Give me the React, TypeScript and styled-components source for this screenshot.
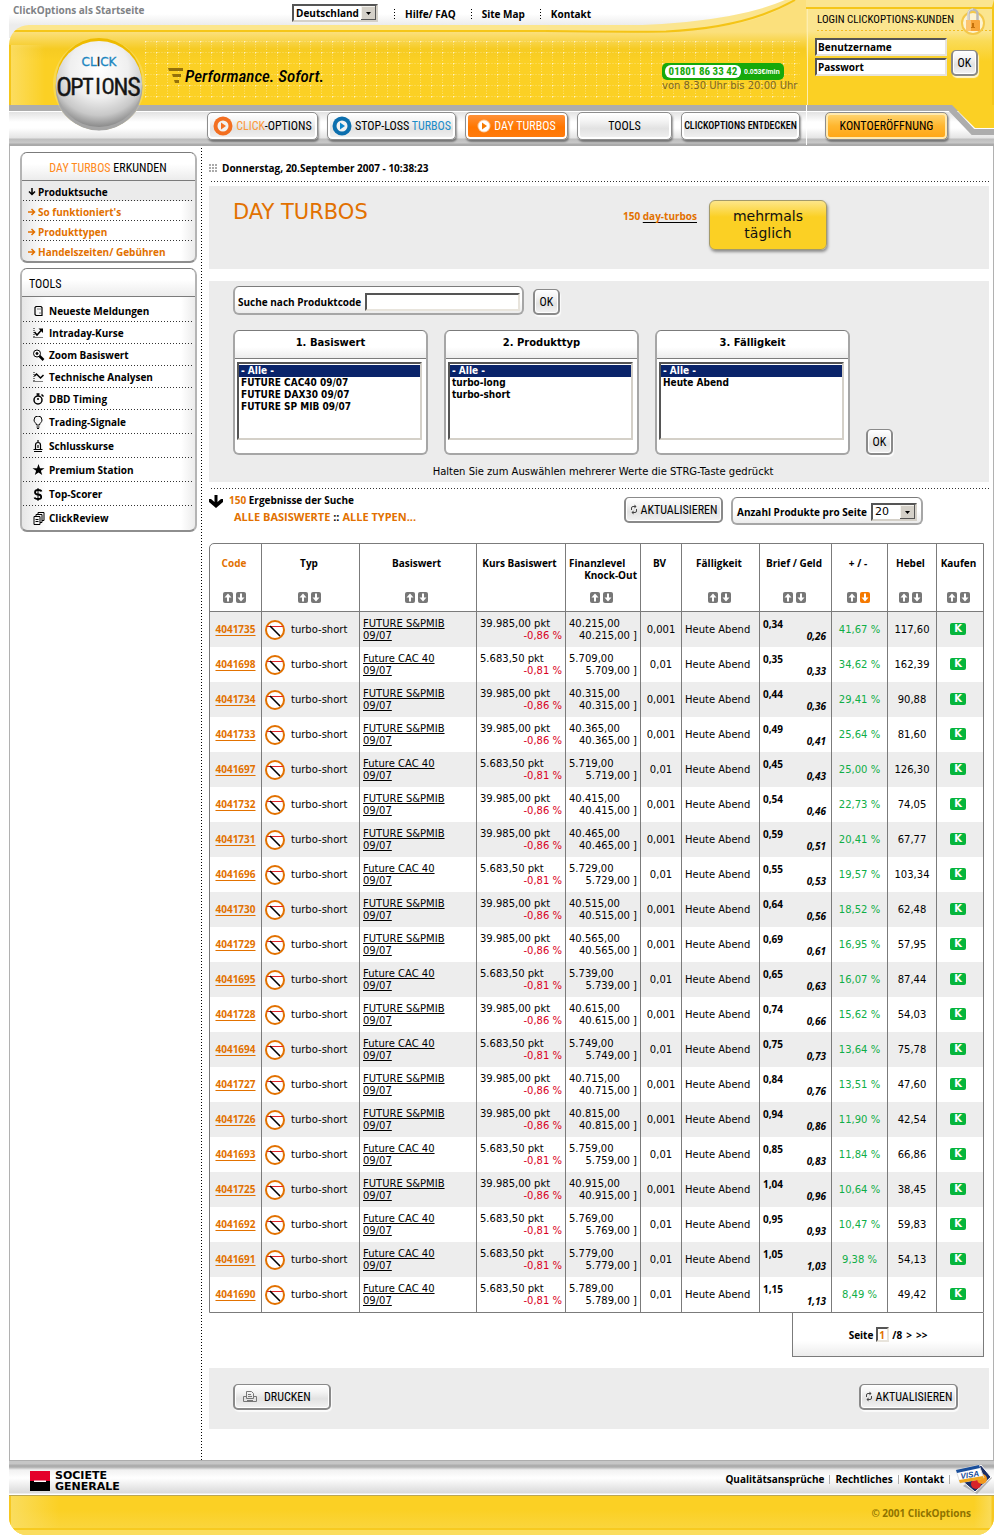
import React from 'react';
import styled, { createGlobalStyle, css } from 'styled-components';

const wide = `'DejaVu Sans', Verdana, sans-serif`;
const bold = `'Open Sans', 'Noto Sans', Tahoma, sans-serif`;
const narrow = `'Liberation Sans Narrow', 'Roboto Condensed', 'Arial Narrow', 'Liberation Sans', sans-serif`;

const orange = '#e27100';
const line = '#7b7b7b';
const dotsX = 'repeating-linear-gradient(90deg, #333 0 1px, transparent 1px 3px)';
const dotsY = 'repeating-linear-gradient(180deg, #000 0 1px, transparent 1px 3px)';

const GlobalStyle = createGlobalStyle`
  * { box-sizing: border-box; }
  body { margin: 0; background: #fff; color: #000; font: 10px/12px ${wide}; }
  a { color: inherit; text-decoration: none; }
  button { cursor: pointer; }
`;

const strong = css`
  font-family: ${bold};
  font-weight: 700;
  font-size: 10px;
`;

const Page = styled.div`
  margin: 0 8px 0 9px;
  min-width: 900px;
`;

/* ---------- header ---------- */

const Header = styled.header`
  position: relative;
`;

const Upper = styled.div`
  display: grid;
  grid-template-columns: 1fr 188px;
`;

const UpperLeft = styled.div`
  position: relative;
`;

const TopBar = styled.nav`
  position: relative;
  z-index: 2;
  display: flex;
  height: 25px;
  padding: 4px 0 0 4px;
  ${strong}
`;

const TopShade = styled.div`
  position: absolute;
  inset: 14px 0 auto 0;
  height: 24px;
  background: linear-gradient(#fff, #ececec 11px);
`;

const StartLink = styled.a`
  flex: 0 0 279px;
  color: #808285;
`;

const SelectBox = styled.span`
  position: relative;
  display: inline-block;
  select {
    appearance: none;
    display: block;
    width: 100%;
    height: 18px;
    padding: 0 14px 0 2px;
    border: 2px solid;
    border-color: #555 #d4d0c8 #d4d0c8 #555;
    border-radius: 0;
    background: #fff;
    color: #000;
    font: inherit;
  }
`;

const CountrySelect = styled(SelectBox)`
  width: 86px;
`;

const SizeSelect = styled(SelectBox)`
  width: 46px;
  font: 11px ${wide};
`;

const DropMark = styled.svg`
  position: absolute;
  top: 2px;
  right: 2px;
  pointer-events: none;
`;

const TopLinks = styled.div`
  display: flex;
  align-items: flex-start;
  margin: 4px 0 0 16px;
  a {
    padding: 0 15px 0 11px;
    background: ${dotsY} 0 1px / 1px 10px no-repeat;
  }
`;

const Banner = styled.div`
  position: relative;
  height: 80px;
  display: flex;
  justify-content: space-between;
  padding: 38px 3px 0 159px;
  border-radius: 20px 0 0 0;
  background:
    linear-gradient(90deg, #f5c619 0 2px, rgba(252, 226, 120, 0.7) 2px, transparent 36px) 0 20px / 100% 100% no-repeat,
    linear-gradient(#fce68c 0 5px, #f5c619 5px 7px, #fbe07c 7px, #f6cb22 24px, #fbd024 36px);
`;

const BackArt = styled.svg`
  position: absolute;
  pointer-events: none;
`;

const GridArt = styled(BackArt)`
  left: 136px;
  top: 16px;
  width: calc(100% - 142px);
  height: 58px;
`;

const CurveArt = styled(BackArt)`
  z-index: 1;
  top: 0;
  right: 0;
`;

const Slogan = styled.p`
  position: relative;
  display: flex;
  align-items: flex-start;
  margin: 0;
  font: italic 500 17px/26px ${narrow};
  svg { margin: 4px 1px 0 0; }
`;

const Hotline = styled.div`
  position: relative;
  width: 141px;
  color: #7a6528;
  white-space: nowrap;
`;

const Pill = styled.div`
  display: flex;
  align-items: center;
  width: 122px;
  height: 17px;
  padding: 2px 1px 2px 3px;
  border-radius: 5px;
  background: #16a90b;
  color: #fff;
  font: 700 7px/12px 'Liberation Sans', sans-serif;
  b {
    flex: 0 0 76px;
    margin-right: 3px;
    border-radius: 6px;
    background: #fff;
    color: #16a90b;
    font: 700 11px/13px ${narrow};
    text-align: center;
  }
`;

const Login = styled.form`
  position: relative;
  padding: 13px 0 0 9px;
  border-top: 7px solid #fbe58f;
  border-right: 2px solid #f5c619;
  background:
    linear-gradient(#f5c619, #f5c619) 0 0 / 100% 2px no-repeat,
    linear-gradient(90deg, transparent 1px, #fdeeb0 1px 2px, transparent 2px),
    linear-gradient(#fbe58f 24px, #fadb57 34px, #fbd024 54px);
`;

const LoginTitle = styled.h2`
  margin: -7px 0 7px 2px;
  padding-bottom: 4px;
  background: repeating-linear-gradient(90deg, #f2bd20 0 2px, transparent 2px 4px) 0 100% / 100% 1px no-repeat;
  font: 400 11px/14px ${narrow};
`;

const LoginGrid = styled.div`
  display: grid;
  grid-template-columns: 132px 27px;
  gap: 2px 4px;
  align-items: start;
`;

const Field = styled.input`
  width: 100%;
  height: 18px;
  padding: 0 1px;
  border: 2px solid;
  border-color: #555 #e8e4dc #e8e4dc #555;
  border-radius: 0;
  background: #fff;
  color: #000;
  ${strong}
`;

const LoginButton = styled.div`
  grid-column: 2;
  grid-row: 1 / 3;
  align-self: end;
`;

const LockBadge = styled.svg`
  position: absolute;
  right: 6px;
  top: 0;
`;

const NavBar = styled.nav`
  position: relative;
  display: grid;
  grid-template-columns: 1fr 188px;
  height: 41px;
  padding-top: 7px;
  border-bottom: 1px solid #a9a9a9;
  background: linear-gradient(#adadad 0 6px, #fff 6px 7px, #e2e2e2 7px, #fff 17px 23px, #e4e4e4 33px, #bdbdbd 34px, #c9c9c9 38px, #ababab 39px);
`;

const NavItems = styled.div`
  display: flex;
  gap: 9px;
  padding-left: 198px;
`;

const AccountCell = styled.div`
  padding-left: 18px;
  margin-top: -7px;
  padding-top: 7px;
  border-left: 1px solid #fff;
`;

const ButtonFace = styled.button<{ $w?: number; $small?: boolean; $tone?: 'orange' | 'gold' }>`
  display: inline-flex;
  align-items: center;
  justify-content: center;
  gap: 3px;
  width: ${p => (p.$w ? `${p.$w}px` : 'auto')};
  height: 28px;
  padding: 0;
  border: 1px solid #8d8d8d;
  border-radius: 5px;
  background: linear-gradient(#fff, #f4f4f4 30%, #e2e2e2 60%, #f2f2f2);
  box-shadow: inset 0 0 0 2px #fff, 1px 2px 2px rgba(0, 0, 0, 0.4);
  color: #000;
  font: ${p => (p.$small ? '500 10px' : '400 12px')}/14px ${narrow};
  white-space: nowrap;
  ${p => p.$tone === 'orange' && css`
    background: linear-gradient(#ff9540, #ff7600 55%, #ff7c10);
    color: #fff;
  `}
  ${p => p.$tone === 'gold' && css`
    background: linear-gradient(#ffd877, #ffb62e 50%, #ffa414);
    box-shadow: inset 0 0 0 2px #ffe9b0, 1px 2px 2px rgba(0, 0, 0, 0.4);
  `}
`;

const SmallButton = styled(ButtonFace)`
  height: 26px;
  border: 2px solid #8a8a8a;
  border-top-width: 1px;
  box-shadow: inset 0 0 0 1px #fff, 1px 2px 1px rgba(255, 255, 255, 0.8);
`;

const PrintButton = styled(SmallButton)`
  justify-content: flex-start;
  gap: 6px;
  padding-left: 8px;
`;

const Tint = styled.span<{ $c: string }>`
  color: ${p => p.$c};
`;

const LogoArt = styled.svg`
  position: absolute;
  left: 42px;
  top: 36px;
  z-index: 3;
`;

const CornerArt = styled(BackArt)`
  right: 0;
  top: 0;
`;

/* ---------- body ---------- */

const Body = styled.div`
  display: grid;
  grid-template-columns: 192px 1fr;
  border: solid #b1b1b1;
  border-width: 0 1px;
`;

const Side = styled.aside`
  padding: 6px 5px 0 10px;
  background: ${dotsY} 100% 2px / 1px 100% no-repeat;
`;

const Panel = styled.section`
  margin-bottom: 5px;
  overflow: hidden;
  border: solid #9b9b9b;
  border-width: 1px 2px 2px;
  border-color: #7b7b7b #b4b4b4 #8e8e8e;
  border-radius: 7px;
  background: linear-gradient(90deg, #e6e6e6, #fff 24px calc(100% - 14px), #ececec);
`;

const PanelTitle = styled.h2<{ $left?: boolean }>`
  margin: 0;
  padding: 8px 8px 4px 7px;
  border-bottom: 1px solid ${line};
  background: linear-gradient(#fff 40%, #ececec);
  font: 400 12px/15px ${narrow};
  text-align: ${p => (p.$left ? 'left' : 'center')};
`;

const List = styled.ul<{ $top?: boolean }>`
  margin: 0;
  padding: ${p => (p.$top ? '3px' : '0')} 0 0;
  list-style: none;
  ${strong}
`;

const Item = styled.li<{ $tall?: boolean; $compact?: boolean; $current?: boolean }>`
  height: ${p => (p.$compact ? 20 : p.$tall ? 24 : 22)}px;
  background: ${dotsX} 1px 100% / calc(100% - 3px) 1px no-repeat ${p => (p.$current ? '#ebebeb' : 'transparent')};
  color: ${p => (p.$compact && !p.$current ? orange : '#000')};
  &:last-child { background-image: none; }
  a {
    display: flex;
    align-items: center;
    gap: ${p => (p.$compact ? 2 : 4)}px;
    height: 100%;
    padding-top: ${p => (p.$compact ? 2 : 0)}px;
    padding-left: ${p => (p.$compact ? 6 : 10)}px;
  }
`;

const Main = styled.main`
  min-width: 0;
  padding: 0 4px 31px 7px;
`;

const DateRow = styled.div`
  display: flex;
  align-items: center;
  gap: 5px;
  height: 36px;
  padding-top: 8px;
  background: ${dotsX} 2px 100% / 100% 1px no-repeat;
  ${strong}
`;

const Block = styled.section`
  background: #ececec;
  padding-left: 24px;
`;

const TitleBlock = styled(Block)`
  display: flex;
  align-items: flex-start;
  height: 83px;
  margin: 4px 0 12px;
  h1 {
    flex: 0 0 390px;
    margin: 14px 0 0;
    color: ${orange};
    font: 21px/24px ${wide};
  }
  p {
    flex: 0 0 86px;
    margin: 24px 0 0;
    color: ${orange};
    ${strong}
  }
  a {
    text-decoration: underline #000;
    text-underline-offset: 2px;
  }
`;

const Daily = styled.button`
  width: 118px;
  height: 50px;
  margin-top: 14px;
  border: 1px solid #a39a6b;
  border-radius: 6px;
  background: linear-gradient(#fde68a, #fbd024 16px);
  box-shadow: 1px 2px 3px rgba(0, 0, 0, 0.4);
  color: #111;
  font: 14px/17px ${wide};
`;

const SearchBlock = styled(Block)`
  padding-top: 5px;
  padding-bottom: 4px;
`;

const Row = styled.div`
  display: flex;
  align-items: flex-end;
  gap: 9px;
`;

const Card = styled.div`
  border: 2px solid #a6a6a6;
  border-top: 1px solid ${line};
  border-radius: 6px;
  background: #fff;
`;

const CodeCard = styled(Card)`
  display: flex;
  align-items: center;
  gap: 4px;
  width: 291px;
  height: 29px;
  padding: 3px 2px 0 3px;
  background: linear-gradient(#fff 50%, #ececec);
  white-space: nowrap;
  ${strong}
`;

const FilterRow = styled(Row)`
  gap: 16px;
  margin: 15px 0 11px;
`;

const FilterCard = styled(Card)`
  width: 195px;
  height: 125px;
  label {
    display: block;
    height: 28px;
    border-bottom: 1px solid ${line};
    background: linear-gradient(#fff 60%, #ececec);
    border-radius: 6px 6px 0 0;
    font: 700 10px/24px ${wide};
    text-align: center;
  }
`;

const ListBox = styled.select`
  display: block;
  width: 185px;
  height: 78px;
  margin: 3px 0 0 2px;
  padding: 1px 0 0;
  overflow: hidden;
  border: 2px solid;
  border-color: #555 #d4d0c8 #d4d0c8 #555;
  border-radius: 0;
  outline: 0;
  background: #fff;
  scrollbar-width: none;
  option {
    min-height: 12px;
    padding: 0 2px;
    color: #000;
    font: 700 10px/12px 'DejaVu Sans Condensed', ${wide};
  }
  option:checked {
    background: #0a246a linear-gradient(#0a246a, #0a246a);
    color: #fff;
  }
`;

const Hint = styled.p`
  margin: 0;
  padding-right: 16px;
  text-align: center;
`;

const Results = styled.div`
  display: flex;
  align-items: flex-start;
  height: 55px;
  margin-top: 6px;
  padding-top: 9px;
  background: ${dotsX} 2px 0 / 100% 1px no-repeat;
  ${strong}
`;

const ResultText = styled.div`
  flex: 0 0 415px;
  display: flex;
  gap: 6px;
  svg { margin-top: -2px; }
  p { margin: -3px 0 8px; }
  p + p { padding-left: 5px; font-size: 11px; }
`;

const SizeCard = styled(Card)`
  display: flex;
  align-items: center;
  gap: 4px;
  height: 28px;
  width: 192px;
  margin-left: 8px;
  padding: 2px 4px 0 4px;
  background: linear-gradient(#fff 50%, #ececec);
  white-space: nowrap;
`;

/* ---------- table ---------- */

const Table = styled.table`
  width: calc(100% - 5px);
  table-layout: fixed;
  border-collapse: separate;
  border-spacing: 0;
  border: 1px solid ${line};
  border-radius: 5px 0 0 0;
  th, td {
    padding: 0 3px;
    border-right: 1px solid ${line};
    white-space: nowrap;
  }
  th:last-child, td:last-child { border-right: 0; }
`;

const HeadCell = styled.th<{ $accent?: boolean }>`
  height: 68px;
  vertical-align: top;
  border-bottom: 1px solid ${line};
  color: ${p => (p.$accent ? orange : '#000')};
  ${strong}
  && { padding: 13px 3px 0 0; }
  > span { display: block; height: 35px; }
  i { display: block; padding: 0 0 0 3px; font-style: normal; text-align: right; }
  i:first-child { text-align: left; }
`;

const Sorters = styled.div`
  display: flex;
  justify-content: center;
  gap: 3px;
`;

const SortButton = styled.button<{ $on?: boolean }>`
  width: 10px;
  height: 11px;
  padding: 0;
  border: 0;
  border-radius: 2px;
  background: ${p => (p.$on ? '#f57900' : '#777')};
  svg { display: block; }
`;

const DataRow = styled.tr`
  height: 35px;
  &:nth-child(odd) { background: #ededed; }
`;

const Mid = styled.td`
  text-align: center;
`;

const CodeLink = styled.a`
  ${strong}
  color: ${orange};
  text-decoration: underline;
  text-underline-offset: 2px;
`;

const TypeCell = styled.div`
  display: flex;
  align-items: center;
  gap: 6px;
`;

const Under = styled.a`
  text-decoration: underline;
  text-underline-offset: 1px;
`;

const Pair = styled.div<{ $tone?: string; $bold?: boolean }>`
  display: flex;
  flex-direction: column;
  span:last-child {
    align-self: flex-end;
    color: ${p => p.$tone || 'inherit'};
  }
  ${p => p.$bold && css`
    ${strong}
    span:last-child { font-style: italic; padding-right: 2px; }
  `}
`;

const Percent = styled(Mid)`
  color: #0fae47;
`;

const Buy = styled.button`
  display: block;
  width: 16px;
  height: 12px;
  margin: 0 auto 2px 10px;
  padding: 0;
  border: 0;
  border-radius: 2px;
  background: #06b53c;
  color: #fff;
  font: 700 10px/12px ${wide};
`;

const Pager = styled.div`
  display: flex;
  align-items: center;
  justify-content: center;
  gap: 3px;
  width: 192px;
  height: 44px;
  margin: 0 5px 11px auto;
  border: 1px solid ${line};
  border-top: 0;
  background: linear-gradient(#fff 65%, #ececec);
  ${strong}
`;

const PageField = styled(Field)`
  width: 13px;
  height: 15px;
  padding: 0 1px;
  color: ${orange};
`;

const PageLinks = styled.span`
  display: flex;
  gap: 4px;
`;

const Actions = styled(Block)`
  display: flex;
  justify-content: space-between;
  height: 61px;
  padding: 16px 31px 0 24px;
`;

/* ---------- footer ---------- */

const FootBar = styled.footer`
  display: flex;
  align-items: center;
  justify-content: space-between;
  height: 35px;
  padding: 4px 1px 0 21px;
  background: linear-gradient(#adadad 0 1px, #c6c6c6 1px 4px, #adadad 5px 7px, #f1f1f1 10px, #fff 18px, #dadada 33px, #fff 34px);
  ${strong}
`;

const Brand = styled.div`
  display: flex;
  align-items: center;
  gap: 5px;
  padding-top: 2px;
  font: 700 11px/11px ${wide};
  span { display: block; }
`;

const FootLinks = styled.div`
  display: flex;
  align-items: center;
  a {
    padding: 0 5px;
    border-right: 1px solid #aaa;
    line-height: 9px;
  }
  svg { margin-left: 5px; }
`;

const Copy = styled.div`
  height: 40px;
  padding: 11px 23px 0 0;
  border-top: 1px solid #b9a655;
  border-radius: 0 0 18px 18px;
  background:
    linear-gradient(transparent 32px, #f7ca20 32px 34px, #fadd5f 34px),
    linear-gradient(90deg, #f7c820 0 2px, rgba(250, 222, 100, 0.9) 2px, transparent 50px calc(100% - 20px), #fadb58 calc(100% - 3px), #f7c820 calc(100% - 2px)),
    linear-gradient(#fbd024 14px, #fad746);
  color: #8f7300;
  text-align: right;
  ${strong}
`;

/* ---------- drawings ---------- */

const Drop = () => (
  <DropMark width="15" height="14" viewBox="0 0 15 14" aria-hidden="true">
    <rect width="15" height="14" fill="#555" />
    <rect width="14" height="13" fill="#f5f3ee" />
    <rect x="1" y="1" width="13" height="12" fill="#d4d0c8" />
    <path d="M5 6h5L7.500 9z" fill="#000" />
  </DropMark>
);

const Play = ({ a, b, inv }: { a: string; b: string; inv?: boolean }) => (
  <svg width={inv ? 14 : 20} height="20" viewBox={inv ? '3 0 14 20' : '0 0 20 20'} aria-hidden="true">
    <circle cx="10" cy="10" r={inv ? 6.500 : 9.500} fill={a} />
    <circle cx="10" cy="10" r="5.500" fill={inv ? '#fff' : '#f1f1f1'} />
    <path d="M8 6.500v7l5-3.500z" fill={b} />
  </svg>
);

const Refresh = () => (
  <svg width="8" height="11" viewBox="0 0 8 11" fill="none" stroke="#444" aria-hidden="true">
    <path d="M1.500 6V4q0-1.500 1.500-1.500h2M6.500 5v2q0 1.500-1.500 1.500H3" />
    <path d="M4.500.5l2 2-2 2zM3.500 6.500l-2 2 2 2z" fill="#444" stroke="none" />
  </svg>
);

const Printer = () => (
  <svg width="15" height="12" viewBox="0 0 15 12" fill="none" stroke="#777" aria-hidden="true">
    <path d="M3.500 5.500h-3v5h13v-5h-3M3.500 7.500v-7h5l2 2v5zM5 3.500h3M5 5.500h4M4 9.500h6" />
  </svg>
);

const Logo = () => (
  <LogoArt width="96" height="98" viewBox="0 0 96 98" role="img" aria-label="Click Options">
    <defs>
      <radialGradient id="ball" cx="50%" cy="32%" r="68%">
        <stop offset="0" stopColor="#fff" />
        <stop offset="0.500" stopColor="#efefef" />
        <stop offset="0.800" stopColor="#c8c8c8" />
        <stop offset="1" stopColor="#8a8a8a" />
      </radialGradient>
    </defs>
    <circle cx="48" cy="48" r="46" fill="#f8d95a" opacity="0.800" />
    <path d="M7 69a46 46 0 0 0 82 0z" fill="#b4b4b4" />
    <circle cx="48" cy="45" r="43" fill="#eebb00" />
    <circle cx="48" cy="51" r="43.500" fill="#a5a5a5" />
    <circle cx="48" cy="48" r="43" fill="url(#ball)" />
    <text x="48" y="30" textAnchor="middle" fontFamily="DejaVu Sans" fontSize="12" fill="#1c86c0" stroke="#1c86c0" strokeWidth="0.300">CL<tspan fill="#222" stroke="#222">I</tspan>CK</text>
    <g fontFamily="Roboto Condensed, Liberation Sans" fontWeight="400" fill="#151515" stroke="#151515" strokeWidth="0.400" textAnchor="middle">
      <text x="13" y="60" fontSize="26">O</text>
      <text x="26" y="59" fontSize="24">P</text>
      <text x="37" y="58" fontSize="22">T</text>
      <text x="47" y="58" fontSize="22">I</text>
      <text x="57" y="58" fontSize="22">O</text>
      <text x="70" y="59" fontSize="24">N</text>
      <text x="83" y="60" fontSize="26">S</text>
    </g>
  </LogoArt>
);

const Lock = () => (
  <LockBadge width="26" height="30" viewBox="0 0 26 30" aria-hidden="true">
    <circle cx="13" cy="16" r="11" fill="#fdf3cf" stroke="#f3c84a" strokeWidth="2" />
    <path d="M8.500 14V7a4.500 4.500 0 0 1 9 0v7" fill="none" stroke="#b9b9b9" strokeWidth="2.500" />
    <path d="M8 14V7a5 5 0 0 1 5-5" fill="none" stroke="#e8e8e8" />
    <rect x="6" y="13" width="14" height="11" rx="1" fill="#f9a63a" />
    <rect x="6" y="13" width="5" height="11" rx="1" fill="#fdc470" />
    <path d="M12 16h2v4h1v1h-4v-1h1z" fill="#c4700a" />
  </LockBadge>
);

const Short = () => (
  <svg width="20" height="20" viewBox="0 0 20 20" aria-hidden="true">
    <circle cx="10" cy="10" r="9" fill="#fff" stroke="#e27100" strokeWidth="2" />
    <path d="M2 6.500h16" stroke="#e3262b" />
    <path d="M5 6l10 10" stroke="#000" strokeWidth="1.600" />
  </svg>
);

const ArrowIcon = ({ down }: { down?: boolean }) => (
  <svg width="8" height="8" viewBox="0 0 8 8" fill="none" stroke="currentColor" strokeWidth="1.500" aria-hidden="true">
    <path d={down ? 'M4 0v7M1 3.500l3 3 3-3' : 'M0 4h7M3.500 1l3 3-3 3'} />
  </svg>
);

const Sort = ({ hot }: { hot?: boolean }) => (
  <Sorters>
    <SortButton aria-label="Aufsteigend sortieren">
      <svg width="10" height="11" viewBox="0 0 10 11"><path d="M5 1.500L1.500 5.500H4V9.500h2v-4h2.500z" fill="#fff" /></svg>
    </SortButton>
    <SortButton aria-label="Absteigend sortieren" $on={hot}>
      <svg width="10" height="11" viewBox="0 0 10 11"><path d="M5 9.500L1.500 5.500H4v-4h2v4h2.500z" fill="#fff" /></svg>
    </SortButton>
  </Sorters>
);

const Visa = () => (
  <svg width="38" height="31" viewBox="0 0 38 31" aria-hidden="true">
    <path d="M8 22l14 8 15-16-8-9z" fill="#8d8d8d" opacity="0.600" />
    <path d="M6 16l14 12L36 13 26 1z" fill="#1a2e66" stroke="#fff" />
    <circle cx="21" cy="20" r="5" fill="#d8232a" />
    <circle cx="27" cy="15" r="5" fill="#f39a1e" />
    <path d="M1 6L24 1l5 13L5 19z" fill="#fff" stroke="#ddd" />
    <path d="M1 6L24 1l1 3L2 9z" fill="#1a4f9c" />
    <path d="M4 16l24-4 1 3L5 19z" fill="#f0a81c" />
    <text x="6" y="15" fontFamily="Liberation Sans" fontWeight="700" fontStyle="italic" fontSize="8" fill="#1a4f9c" transform="rotate(-9 6 15)">VISA</text>
  </svg>
);

const toolIcons: React.ReactNode[] = [
  <><path d="M3.500 1.500h5l1 1v8h-6l-1-1v-7z" strokeWidth="1.200" /><path d="M5 4h1M7 4h1M7 8h1" /></>,
  <><path d="M1.500 1v10M1 10.500h10" strokeDasharray="1 1" /><path d="M2 5l2.500 3L9 3" strokeWidth="1.500" /><path d="M6 1.500h4.500V6z" fill="#000" stroke="none" /></>,
  <><circle cx="4.500" cy="4.500" r="3.500" /><circle cx="4.500" cy="4.500" r="1" fill="#000" /><path d="M7 7l4 4" strokeWidth="2.500" /></>,
  <><path d="M1.500 1v10M1 10.500h10" strokeDasharray="1 1" /><path d="M2 5l2-2 4 4 3-3" strokeWidth="1.500" /></>,
  <><circle cx="5.500" cy="7" r="4" strokeWidth="1.500" /><path d="M4 1h3M5.500 1v2M9 1.500l2 2M5.500 7V5" strokeWidth="1.500" /></>,
  <><path d="M4 9C4 7 1.500 6.500 1.500 4a4 4 0 0 1 8 0C9.500 6.500 7 7 7 9z" /><path d="M4 11h3M4.500 12.500h2" /></>,
  <><path d="M5.500 0v2M3 9V5q0-2.500 2.500-2.500T8 5v4M1 9.500h9M1.500 11.500h8M5.500 5v3" strokeWidth="1.200" /></>,
  <path d="M6 0l1.500 4.200H12L8.400 6.800 9.700 11 6 8.400 2.300 11l1.300-4.200L0 4.200h4.500z" fill="#000" stroke="none" />,
  <><path d="M9 3.500Q8.500 2 5.500 2T2.500 4.200t3 2.300 3.200 2.300-3 2.200T2 9.500" strokeWidth="1.800" /><path d="M5.500 0v13" /></>,
  <><path d="M5.500 2.500v-2h6v8h-2M3.500 4.500v-2h6v8h-2M1.500 4.500h6v8h-6zM3 7.500h3M3 9.500h3" /></>,
];

const ToolIcon = ({ n }: { n: number }) => (
  <svg width="13" height="13" viewBox="0 0 12 13" fill="none" stroke="#000" aria-hidden="true">{toolIcons[n]}</svg>
);

/* ---------- data ---------- */

const explore = ['Produktsuche', "So funktioniert's", 'Produkttypen', 'Handelszeiten/ Gebühren'];
const tools = ['Neueste Meldungen', 'Intraday-Kurse', 'Zoom Basiswert', 'Technische Analysen', 'DBD Timing', 'Trading-Signale', 'Schlusskurse', 'Premium Station', 'Top-Scorer', 'ClickReview'];
const widths = [52, 98, 117, 89, 75, 41, 78, 72, 56, 49, 46];

const quotes: [string, string, string, string, string, string, string][] = [
  ['4041735', 'S', '40.215,00', '0,34', '0,26', '41,67', '117,60'],
  ['4041698', 'C', '5.709,00', '0,35', '0,33', '34,62', '162,39'],
  ['4041734', 'S', '40.315,00', '0,44', '0,36', '29,41', '90,88'],
  ['4041733', 'S', '40.365,00', '0,49', '0,41', '25,64', '81,60'],
  ['4041697', 'C', '5.719,00', '0,45', '0,43', '25,00', '126,30'],
  ['4041732', 'S', '40.415,00', '0,54', '0,46', '22,73', '74,05'],
  ['4041731', 'S', '40.465,00', '0,59', '0,51', '20,41', '67,77'],
  ['4041696', 'C', '5.729,00', '0,55', '0,53', '19,57', '103,34'],
  ['4041730', 'S', '40.515,00', '0,64', '0,56', '18,52', '62,48'],
  ['4041729', 'S', '40.565,00', '0,69', '0,61', '16,95', '57,95'],
  ['4041695', 'C', '5.739,00', '0,65', '0,63', '16,07', '87,44'],
  ['4041728', 'S', '40.615,00', '0,74', '0,66', '15,62', '54,03'],
  ['4041694', 'C', '5.749,00', '0,75', '0,73', '13,64', '75,78'],
  ['4041727', 'S', '40.715,00', '0,84', '0,76', '13,51', '47,60'],
  ['4041726', 'S', '40.815,00', '0,94', '0,86', '11,90', '42,54'],
  ['4041693', 'C', '5.759,00', '0,85', '0,83', '11,84', '66,86'],
  ['4041725', 'S', '40.915,00', '1,04', '0,96', '10,64', '38,45'],
  ['4041692', 'C', '5.769,00', '0,95', '0,93', '10,47', '59,83'],
  ['4041691', 'C', '5.779,00', '1,05', '1,03', '9,38', '54,13'],
  ['4041690', 'C', '5.789,00', '1,15', '1,13', '8,49', '49,42'],
];

const filters = [
  { id: 'basis', title: '1. Basiswert', options: ['FUTURE CAC40 09/07', 'FUTURE DAX30 09/07', 'FUTURE SP MIB 09/07'] },
  { id: 'typ', title: '2. Produkttyp', options: ['turbo-long', 'turbo-short'] },
  { id: 'frist', title: '3. Fälligkeit', options: ['Heute Abend'] },
];

const SiteHeader = () => (
  <Header>
    <Upper>
      <UpperLeft>
        <TopShade />
        <TopBar>
          <StartLink href="#">ClickOptions als Startseite</StartLink>
          <CountrySelect>
            <select aria-label="Land" defaultValue="de"><option value="de">Deutschland</option></select>
            <Drop />
          </CountrySelect>
          <TopLinks>
            <a href="#">Hilfe/ FAQ</a>
            <a href="#">Site Map</a>
            <a href="#">Kontakt</a>
          </TopLinks>
        </TopBar>
        <Banner>
          <GridArt aria-hidden="true">
            <defs>
              <pattern id="mesh" width="11" height="11" patternUnits="userSpaceOnUse">
                <path d="M0 .5h1M2.500 .5h1M5.500 .5h1M8.500 .5h1M.5 3v1M.5 5.500v1M.5 8v1M0 .5h2M.5 0v2" stroke="#fff" strokeOpacity="0.350" />
              </pattern>
            </defs>
            <rect width="100%" height="100%" fill="url(#mesh)" />
          </GridArt>
          <Slogan>
            <svg width="16" height="16" viewBox="0 0 16 16" aria-hidden="true">
              <path d="M0 1h15v3H1zM4 7h9v3H5zM6 13h5v3H7z" fill="#94700a" />
            </svg>
            Performance. Sofort.
          </Slogan>
          <Hotline>
            <Pill><b>01801 86 33 42</b>0.053€/min</Pill>
            von 8:30 Uhr bis 20:00 Uhr
          </Hotline>
        </Banner>
        <CurveArt width="260" height="40" viewBox="0 0 260 40" aria-hidden="true">
          <defs>
            <linearGradient id="glow" gradientUnits="userSpaceOnUse" x1="0" y1="32" x2="0" y2="49">
              <stop offset="0" stopColor="#fbe07c" />
              <stop offset="1" stopColor="#f6cb22" />
            </linearGradient>
          </defs>
          <path d="M110 32Q200 27 249 0h11v40H110z" fill="url(#glow)" />
          <path d="M0 25.500Q170 30 239 0h10Q205 32 100 31.500L0 31z" fill="#fbe58f" />
          <path d="M0 31Q70 32 120 31.500 200 28 249 0" fill="none" stroke="#f4c416" strokeWidth="2" />
        </CurveArt>
      </UpperLeft>
      <Login onSubmit={e => e.preventDefault()}>
        <LoginTitle>LOGIN CLICKOPTIONS-KUNDEN</LoginTitle>
        <LoginGrid>
          <Field aria-label="Benutzername" defaultValue="Benutzername" />
          <Field aria-label="Passwort" defaultValue="Passwort" />
          <LoginButton><SmallButton $w={27}>OK</SmallButton></LoginButton>
        </LoginGrid>
        <Lock />
      </Login>
    </Upper>
    <NavBar>
      <CornerArt width="50" height="30" viewBox="0 0 50 30" aria-hidden="true">
        <path d="M5 2l24 25h21" fill="none" stroke="#adadad" strokeWidth="6" />
        <path d="M8 0l23 23h19V0z" fill="#fbd024" />
      </CornerArt>
      <NavItems>
        <ButtonFace $w={111}><Play a="#f36f21" b="#f36f21" /><span><Tint $c="#fb9a3c">CLICK</Tint>-OPTIONS</span></ButtonFace>
        <ButtonFace $w={129}><Play a="#0c6fae" b="#0c86cc" /><span>STOP-LOSS <Tint $c="#1c8cc8">TURBOS</Tint></span></ButtonFace>
        <ButtonFace $w={103} $tone="orange"><Play inv a="#f9c79a" b="#f57900" />DAY TURBOS</ButtonFace>
        <ButtonFace $w={95}>TOOLS</ButtonFace>
        <ButtonFace $w={119} $small>CLICKOPTIONS ENTDECKEN</ButtonFace>
      </NavItems>
      <AccountCell><ButtonFace $w={123} $tone="gold">KONTOERÖFFNUNG</ButtonFace></AccountCell>
    </NavBar>
    <Logo />
  </Header>
);

const Sidebar = () => (
  <Side>
    <Panel>
      <PanelTitle><Tint $c="#ff8a1c">DAY TURBOS</Tint> ERKUNDEN</PanelTitle>
      <List>
        {explore.map((t, i) => (
          <Item key={t} $compact $current={i === 0}><a href="#"><ArrowIcon down={i === 0} />{t}</a></Item>
        ))}
      </List>
    </Panel>
    <Panel>
      <PanelTitle $left>TOOLS</PanelTitle>
      <List $top>
        {tools.map((t, i) => (
          <Item key={t} $tall={i > 4}><a href="#"><ToolIcon n={i} />{t}</a></Item>
        ))}
      </List>
    </Panel>
  </Side>
);

const QuoteTable = () => (
  <Table>
    <colgroup>{widths.map((w, i) => <col key={i} style={{ width: `${w}px` }} />)}</colgroup>
    <thead>
      <tr>
        <HeadCell $accent><span>Code</span><Sort /></HeadCell>
        <HeadCell><span>Typ</span><Sort /></HeadCell>
        <HeadCell><span>Basiswert</span><Sort /></HeadCell>
        <HeadCell><span>Kurs Basiswert</span></HeadCell>
        <HeadCell><span><i>Finanzlevel</i><i>Knock-Out</i></span><Sort /></HeadCell>
        <HeadCell><span>BV</span></HeadCell>
        <HeadCell><span>Fälligkeit</span><Sort /></HeadCell>
        <HeadCell><span>Brief / Geld</span><Sort /></HeadCell>
        <HeadCell><span>+ / -</span><Sort hot /></HeadCell>
        <HeadCell><span>Hebel</span><Sort /></HeadCell>
        <HeadCell><span>Kaufen</span><Sort /></HeadCell>
      </tr>
    </thead>
    <tbody>
      {quotes.map(([code, kind, level, ask, bid, pct, lever]) => {
        const mib = kind === 'S';
        return (
          <DataRow key={code}>
            <Mid><CodeLink href="#">{code}</CodeLink></Mid>
            <td><TypeCell><Short />turbo-short</TypeCell></td>
            <td><Under href="#">{mib ? 'FUTURE S&PMIB' : 'Future CAC 40'}<br />09/07</Under></td>
            <td><Pair $tone="#d8001c"><span>{mib ? '39.985,00 pkt' : '5.683,50 pkt'}</span><span>{mib ? '-0,86 %' : '-0,81 %'}</span></Pair></td>
            <td><Pair><span>{level}</span><span>{level} ]</span></Pair></td>
            <Mid>{mib ? '0,001' : '0,01'}</Mid>
            <td>Heute Abend</td>
            <td><Pair $bold><span>{ask}</span><span>{bid}</span></Pair></td>
            <Percent>{pct} %</Percent>
            <Mid>{lever}</Mid>
            <td><Buy aria-label="Kaufen">K</Buy></td>
          </DataRow>
        );
      })}
    </tbody>
  </Table>
);

export default function App() {
  return (
    <Page>
      <GlobalStyle />
      <SiteHeader />
      <Body>
        <Sidebar />
        <Main>
          <DateRow>
            <svg width="8" height="8" viewBox="0 0 8 8" fill="#aaa" aria-hidden="true">
              <path d="M0 0h2v2H0zM3 0h2v2H3zM6 0h2v2H6zM0 3h2v2H0zM3 3h2v2H3zM6 3h2v2H6zM0 6h2v2H0zM3 6h2v2H3zM6 6h2v2H6z" />
            </svg>
            Donnerstag, 20.September 2007 - 10:38:23
          </DateRow>
          <TitleBlock>
            <h1>DAY TURBOS</h1>
            <p>150 <a href="#">day-turbos</a></p>
            <Daily>mehrmals<br />täglich</Daily>
          </TitleBlock>
          <SearchBlock>
            <Row>
              <CodeCard>
                <label htmlFor="code">Suche nach Produktcode</label>
                <Field id="code" />
              </CodeCard>
              <SmallButton $w={27}>OK</SmallButton>
            </Row>
            <FilterRow>
              {filters.map(f => (
                <FilterCard key={f.id}>
                  <label htmlFor={f.id}>{f.title}</label>
                  <ListBox id={f.id} multiple size={6} defaultValue={['alle']}>
                    <option value="alle">- Alle -</option>
                    {f.options.map(o => <option key={o}>{o}</option>)}
                  </ListBox>
                </FilterCard>
              ))}
              <SmallButton $w={27}>OK</SmallButton>
            </FilterRow>
            <Hint>Halten Sie zum Auswählen mehrerer Werte die STRG-Taste gedrückt</Hint>
          </SearchBlock>
          <Results>
            <ResultText>
              <svg width="14" height="13" viewBox="0 0 14 13" aria-hidden="true">
                <path d="M5.500 0h3v7L12 4h2v3L7 13 0 7V4h2l3.500 3z" />
              </svg>
              <div>
                <p><Tint $c={orange}>150</Tint> Ergebnisse der Suche</p>
                <p><Tint $c={orange}>ALLE BASISWERTE</Tint> :: <Tint $c={orange}>ALLE TYPEN...</Tint></p>
              </div>
            </ResultText>
            <SmallButton $w={99}><Refresh />AKTUALISIEREN</SmallButton>
            <SizeCard>
              <label htmlFor="size">Anzahl Produkte pro Seite</label>
              <SizeSelect>
                <select id="size" defaultValue="20"><option>20</option></select>
                <Drop />
              </SizeSelect>
            </SizeCard>
          </Results>
          <QuoteTable />
          <Pager>
            <label htmlFor="page">Seite</label>
            <PageField id="page" defaultValue="1" />
            <PageLinks><span>/8</span><a href="#">&gt;</a><a href="#">&gt;&gt;</a></PageLinks>
          </Pager>
          <Actions>
            <PrintButton $w={98}><Printer />DRUCKEN</PrintButton>
            <SmallButton $w={99}><Refresh />AKTUALISIEREN</SmallButton>
          </Actions>
        </Main>
      </Body>
      <FootBar>
        <Brand>
          <svg width="20" height="20" viewBox="0 0 20 20" aria-hidden="true">
            <path d="M0 0h20v10H0z" fill="#e4002b" /><path d="M0 10h20v10H0z" /><path d="M4 9.500h12v1.500H4z" fill="#fff" />
          </svg>
          <div><span>SOCIETE</span><span>GENERALE</span></div>
        </Brand>
        <FootLinks>
          <a href="#">Qualitätsansprüche</a>
          <a href="#">Rechtliches</a>
          <a href="#">Kontakt</a>
          <Visa />
        </FootLinks>
      </FootBar>
      <Copy>© 2001 ClickOptions</Copy>
    </Page>
  );
}
